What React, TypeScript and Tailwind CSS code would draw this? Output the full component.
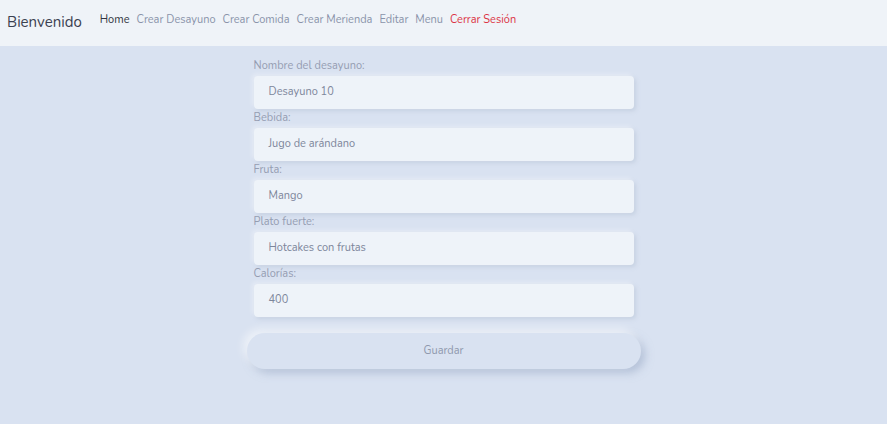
import React from 'react';

const FONT = { fontFamily: 'Nunito, Lato, "Noto Sans", sans-serif' };

const LINKS = ['Home', 'Crear Desayuno', 'Crear Comida', 'Crear Merienda', 'Editar', 'Menu'];

const FIELDS = [
  { label: 'Nombre del desayuno:', value: 'Desayuno 10' },
  { label: 'Bebida:', value: 'Jugo de arándano' },
  { label: 'Fruta:', value: 'Mango' },
  { label: 'Plato fuerte:', value: 'Hotcakes con frutas' },
  { label: 'Calorías:', value: '400' },
];

function Navbar() {
  return (
    <nav className="h-[46px] bg-[#eff3f8] flex items-center pl-[7px]">
      <span className="text-[15px] text-[#3b4150] mr-[18px] pb-[2px]">Bienvenido</span>
      <ul className="flex items-center gap-[7px] text-[11px] pb-[6px]">
        {LINKS.map((l, i) => (
          <li key={l} className={i === 0 ? 'text-[#2f3441]' : 'text-[#8a93aa]'}>
            {l}
          </li>
        ))}
        <li className="text-[#dc3445]">Cerrar Sesión</li>
      </ul>
    </nav>
  );
}

function Field({ label, value }: { label: string; value: string }) {
  return (
    <div className="flex flex-col">
      <label className="text-[11px] text-[#959db1] leading-[14px] h-[17px] pt-[1px]">{label}</label>
      <div className="h-[33px] mt-[1px] bg-[#eef3f9] rounded-[4px] flex items-center px-[15px] text-[11px] text-[#7d869b] shadow-[-2px_-2px_4px_rgba(255,255,255,0.35),2px_2px_4px_rgba(163,177,198,0.35)]">
        {value}
      </div>
    </div>
  );
}

export default function App() {
  return (
    <div className="flex h-[424px] bg-white" style={FONT}>
      <div className="w-[887px] h-full flex flex-col bg-[#d9e2f1]">
        <Navbar />
        <main className="flex flex-col items-center pt-[12px]">
          <form className="w-[394px] flex flex-col">
            <div className="px-[7px] flex flex-col gap-[1px]">
              {FIELDS.map((f) => (
                <Field key={f.label} label={f.label} value={f.value} />
              ))}
            </div>
            <button
              type="button"
              className="mt-[16px] h-[36px] w-full rounded-full bg-[#d9e2f1] text-[11px] text-[#8f98ad] shadow-[-4px_-4px_8px_rgba(255,255,255,0.55),4px_4px_8px_rgba(150,166,194,0.55)]"
            >
              Guardar
            </button>
          </form>
        </main>
      </div>
    </div>
  );
}
